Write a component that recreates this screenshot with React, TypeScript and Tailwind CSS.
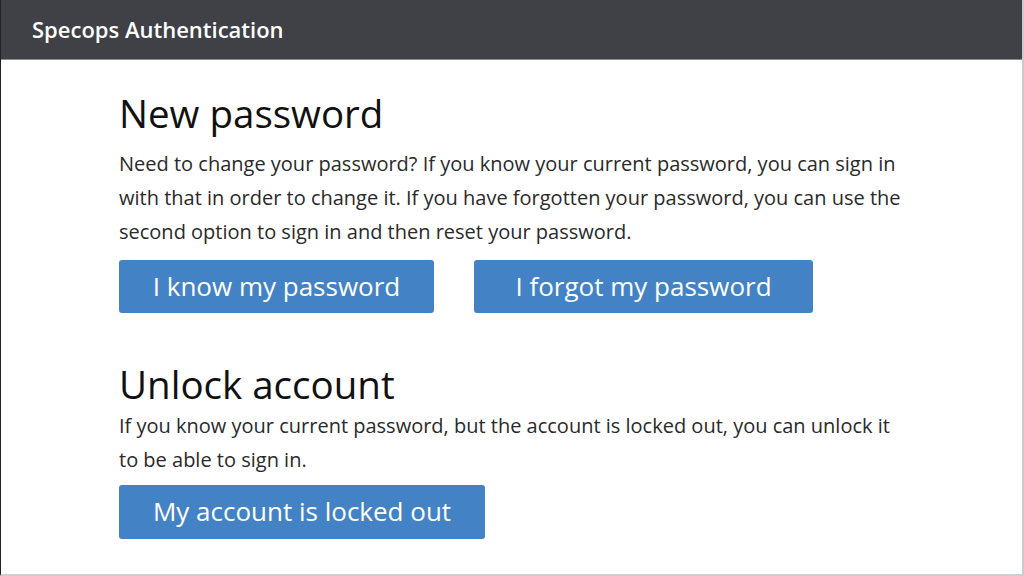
export default function App() {
  return (
    <div className="w-[1024px] h-[576px] bg-white border-l border-l-[#222] border-r-2 border-r-[#c8ccd2] border-b-2 border-b-[#c9d0d8] overflow-hidden font-['Open_Sans',sans-serif]">
      <div className="h-[60px] bg-[#404146] border-b border-b-[#8a8c90] flex items-center pl-[31px]">
        <span className="text-white text-[22px] font-semibold pb-[1px]">Specops Authentication</span>
      </div>

      <div className="pl-[118px] w-[905px]">
        <h1 className="mt-[29px] text-[38.5px] leading-[49px] text-[#111]">New password</h1>
        <p className="mt-[9px] text-[20px] leading-[34px] text-[#2a2a2a]">
          Need to change your password? If you know your current password, you can sign in with that in order to change it. If you have forgotten your password, you can use the second option to sign in and then reset your password.
        </p>
        <div className="flex gap-[40px] mt-[11px]">
          <button className="w-[315px] h-[53px] rounded-[3px] bg-[#4383c5] text-white text-[26px] leading-none pb-[2px]">I know my password</button>
          <button className="w-[339px] h-[53px] rounded-[3px] bg-[#4383c5] text-white text-[26px] leading-none pb-[2px]">I forgot my password</button>
        </div>

        <h1 className="mt-[47px] text-[38.5px] leading-[49px] text-[#111]">Unlock account</h1>
        <p className="mt-0 text-[20px] leading-[34px] text-[#2a2a2a]">
          If you know your current password, but the account is locked out, you can unlock it to be able to sign in.
        </p>
        <button className="mt-[8px] w-[366px] h-[54px] rounded-[3px] bg-[#4383c5] text-white text-[26px] leading-none pb-[2px]">My account is locked out</button>
      </div>
    </div>
  )
}
